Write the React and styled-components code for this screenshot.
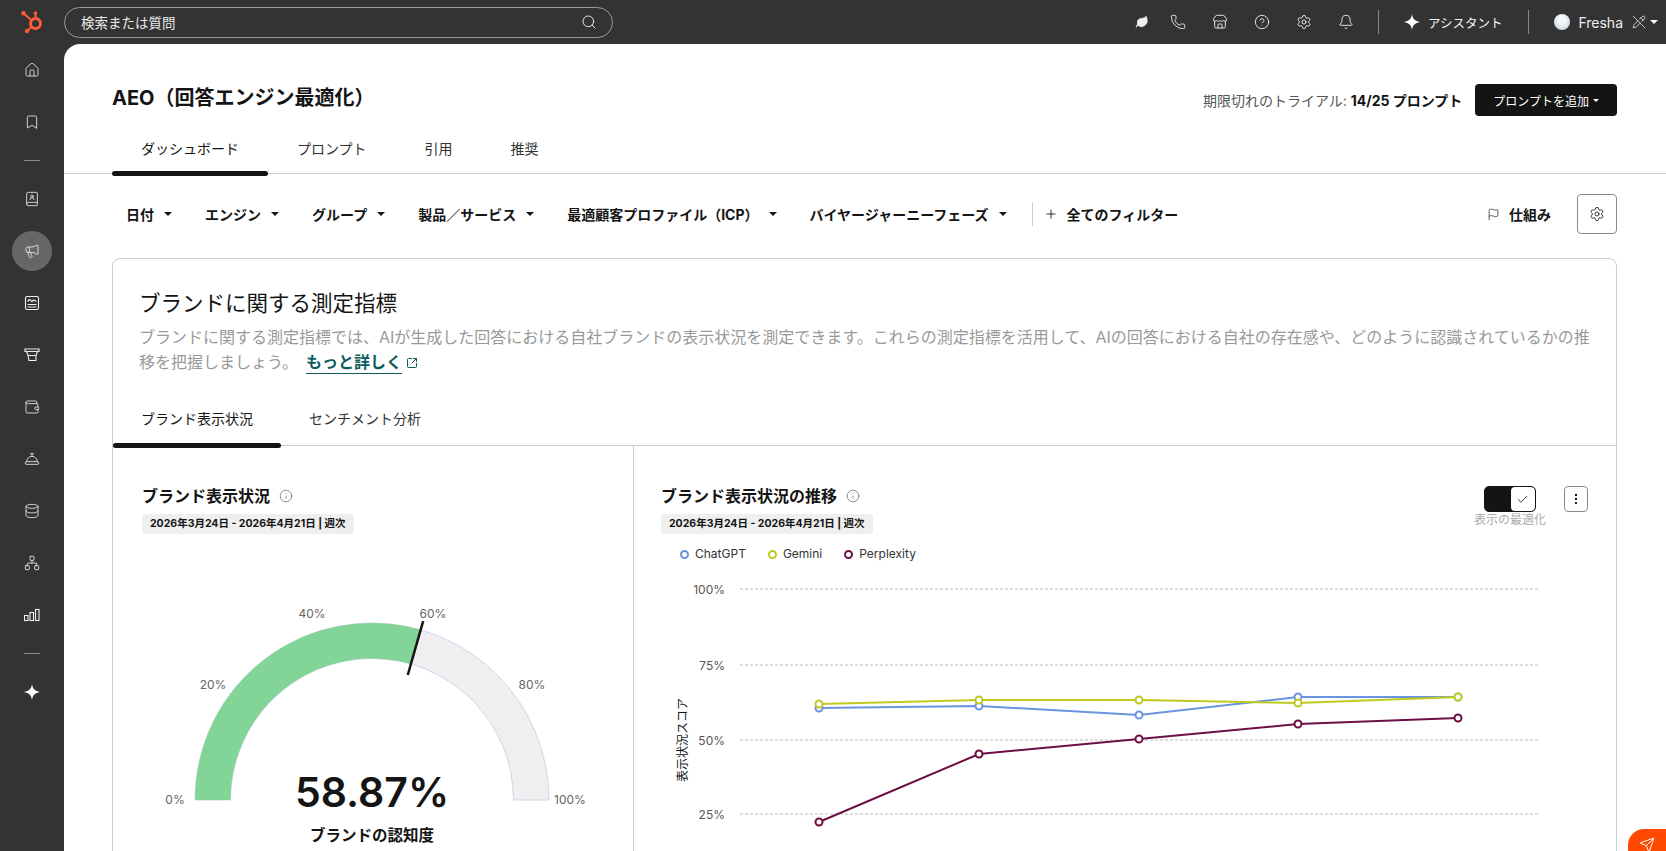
import React from 'react';
import styled, { createGlobalStyle } from 'styled-components';
import {
  Bell, Bookmark, BookUser, Check, CircleHelp, ConciergeBell, Database, EllipsisVertical,
  Flag, House, Info, Leaf, Megaphone, Network, PencilOff, Phone, Plus, Search, Send,
  Settings, SquareArrowOutUpRight, Store, Wallet,
} from 'lucide-react';

const GlobalStyle = createGlobalStyle`
  html, body { margin: 0; height: 100%; overflow: hidden; }
  body {
    font-family: Inter, "Noto Sans CJK JP", sans-serif;
    color: #141414;
    background: #333;
  }
`;

const Shell = styled.div`
  display: grid;
  grid-template-columns: 64px 1fr;
  grid-template-rows: 44px 1fr;
  height: 100vh;
`;

const TopBar = styled.header`
  grid-column: 1 / 3;
  display: flex;
  align-items: center;
  padding-right: 8px;
  background: #333;
  color: #fff;
`;
const LogoCell = styled.div`
  width: 64px;
  display: flex;
  justify-content: center;
`;
const SearchBox = styled.div`
  width: 549px;
  height: 31px;
  box-sizing: border-box;
  display: flex;
  align-items: center;
  justify-content: space-between;
  padding: 0 15px 0 16px;
  border: 1px solid #9a9a9a;
  border-radius: 16px;
  font-size: 13.5px;
  color: #e8e8e8;
`;
const TopRight = styled.div`
  margin-left: auto;
  display: flex;
  align-items: center;
`;
const TopIcon = styled.span`
  width: ${(p) => (p.$narrow ? 30 : 42)}px;
  display: flex;
  justify-content: center;
`;
const TopDivider = styled.span`
  width: 1px;
  height: 24px;
  background: #8a8a8a;
  margin: ${(p) => p.$margin};
`;
const AssistantLabel = styled.span`
  font-size: 12.5px;
  margin-left: 8px;
  color: #f2f2f2;
`;
const Avatar = styled.span`
  width: 16px;
  height: 16px;
  border-radius: 50%;
  background: radial-gradient(circle at 50% 38%, #f4f6f9 0 30%, #cfd7e3 75%);
`;
const AccountName = styled.span`
  font-size: 14px;
  margin: 0 9px 0 8px;
  color: #eee;
`;
const Caret = styled.span`
  display: inline-block;
  border-left: ${(p) => p.$size || 4}px solid transparent;
  border-right: ${(p) => p.$size || 4}px solid transparent;
  border-top: ${(p) => p.$size || 4}px solid ${(p) => p.$color || '#141414'};
  margin-left: ${(p) => p.$gap || 0}px;
`;

const SideBar = styled.nav`
  display: flex;
  flex-direction: column;
  align-items: center;
  background: #333;
  color: #eee;
`;
const SideItem = styled.div`
  width: 40px;
  height: 52px;
  display: flex;
  align-items: center;
  justify-content: center;
  position: relative;
  z-index: 0;
  ${(p) => p.$active && `
    &::before {
      content: '';
      position: absolute;
      z-index: -1;
      width: 40px;
      height: 40px;
      border-radius: 50%;
      background: #666;
    }
  `}
`;
const SideDivider = styled.div`
  width: 16px;
  height: 1px;
  background: #8a8a8a;
  margin: 12px 0;
`;

const Main = styled.main`
  background: #fff;
  border-top-left-radius: 16px;
  overflow: hidden;
  min-height: 0;
`;
const PageHeader = styled.div`
  border-bottom: 1px solid #ccc;
`;
const HeaderTop = styled.div`
  display: flex;
  align-items: center;
  justify-content: space-between;
  padding: 40px 49px 0 48px;
`;
const PageTitle = styled.h1`
  margin: 0 0 4px;
  font-size: 20px;
  font-weight: 700;
  line-height: 28px;
`;
const HeaderActions = styled.div`
  display: flex;
  align-items: center;
  gap: 13px;
`;
const TrialText = styled.span`
  font-size: 14px;
  color: #555;
  b { color: #141414; font-weight: 700; }
`;
const PrimaryButton = styled.button`
  height: 32px;
  padding: 0 18px;
  display: flex;
  align-items: center;
  background: #141414;
  color: #fff;
  border: 0;
  border-radius: 4px;
  font: inherit;
  font-size: 12px;
`;
const TabRow = styled.div`
  display: flex;
  padding-left: ${(p) => p.$inset || 0}px;
  margin-top: ${(p) => p.$top || 0}px;
  border-bottom: ${(p) => (p.$lined ? '1px solid #ccc' : '0')};
`;
const Tab = styled.div`
  position: relative;
  padding: 0 ${(p) => p.$pad || 29}px;
  height: ${(p) => p.$height || 45}px;
  display: flex;
  align-items: center;
  padding-bottom: ${(p) => p.$under || 5}px;
  box-sizing: border-box;
  font-size: 14px;
  color: ${(p) => (p.$active ? '#141414' : '#333')};
  &::after {
    content: '';
    display: ${(p) => (p.$active ? 'block' : 'none')};
    position: absolute;
    left: 0;
    right: 0;
    bottom: -3px;
    height: 5px;
    border-radius: 3px;
    background: #141414;
  }
`;

const FilterBar = styled.div`
  display: flex;
  align-items: center;
  margin: 20px 49px 24px 62px;
  height: 40px;
  font-size: 14px;
  font-weight: 700;
`;
const FilterButton = styled.span`
  display: flex;
  align-items: center;
  margin-right: 33px;
  white-space: nowrap;
`;
const FilterDivider = styled.span`
  width: 1px;
  height: 24px;
  background: #ccc;
  margin: 0 11px 0 -8px;
`;
const AllFilters = styled.span`
  display: flex;
  align-items: center;
  gap: 9px;
`;
const FilterRight = styled.div`
  margin-left: auto;
  display: flex;
  align-items: center;
`;
const HowItWorks = styled.span`
  display: flex;
  align-items: center;
  gap: 9px;
  margin-right: 26px;
`;
const SquareButton = styled.span`
  width: ${(p) => p.$w}px;
  height: ${(p) => p.$h}px;
  box-sizing: border-box;
  display: flex;
  align-items: center;
  justify-content: center;
  border: 1px solid #8a8a8a;
  border-radius: 4px;
`;

const Card = styled.section`
  margin: 0 49px 0 48px;
  border: 1px solid #ccc;
  border-radius: 8px;
`;
const CardHead = styled.div`
  padding: 29px 26px 0;
`;
const CardTitle = styled.h2`
  margin: 0;
  font-size: 21.5px;
  font-weight: 400;
  line-height: 30px;
`;
const CardDesc = styled.p`
  margin: 7px 0 0;
  font-size: 16px;
  line-height: 25px;
  color: #999;
  white-space: nowrap;
`;
const MoreLink = styled.a`
  margin-left: 8px;
  color: #0b5c5c;
  font-weight: 700;
  border-bottom: 1px solid #0b5c5c;
  padding-bottom: 1px;
`;
const LinkIcon = styled(SquareArrowOutUpRight)`
  margin-left: 4px;
  vertical-align: -1px;
  color: #0b5c5c;
`;

const Panels = styled.div`
  display: grid;
  grid-template-columns: 520px 1fr;
`;
const Panel = styled.div`
  padding-top: 40px;
  position: relative;
  min-width: 0;
  border-left: ${(p) => (p.$divided ? '1px solid #ccc' : '0')};
`;
const PanelHead = styled.div`
  display: flex;
  justify-content: space-between;
  padding: 0 ${(p) => (p.$divided ? 28 : 0)}px 0 ${(p) => (p.$divided ? 27 : 29)}px;
`;
const PanelTitle = styled.h3`
  margin: 0;
  display: flex;
  align-items: center;
  gap: 9px;
  font-size: 16px;
  line-height: 20px;
  font-weight: 700;
  svg { color: #666; }
`;
const DatePill = styled.div`
  display: inline-block;
  margin-top: 8px;
  padding: 0 8px;
  height: 20px;
  line-height: 20px;
  background: #efefef;
  border-radius: 4px;
  font-size: 10.5px;
  font-weight: 700;
`;
const Controls = styled.div`
  display: flex;
  align-items: flex-start;
  gap: 18px;
`;
const ToggleBlock = styled.div`
  display: flex;
  flex-direction: column;
  align-items: center;
`;
const Toggle = styled.div`
  width: 52px;
  height: 26px;
  box-sizing: border-box;
  display: flex;
  justify-content: flex-end;
  border: 1px solid #141414;
  border-radius: 5px;
  background: #141414;
  overflow: hidden;
`;
const ToggleKnob = styled.span`
  width: 24px;
  display: flex;
  align-items: center;
  justify-content: center;
  background: #fff;
  border-radius: 4px;
`;
const ToggleLabel = styled.span`
  font-size: 12px;
  line-height: 16px;
  color: #aaa;
  white-space: nowrap;
`;

const GaugeWrap = styled.div`
  position: relative;
  height: 280px;
  margin-top: 56px;
`;
const GaugeSvg = styled.svg`
  display: block;
  font-size: 12px;
  fill: #666;
`;
const GaugeValue = styled.div`
  position: absolute;
  left: 0;
  width: 518px;
  top: 177px;
  text-align: center;
  font-size: 41px;
  line-height: 50px;
  font-weight: 600;
`;
const GaugeCaption = styled.div`
  position: absolute;
  left: 0;
  width: 518px;
  top: 234px;
  text-align: center;
  font-size: 15.5px;
  line-height: 24px;
  font-weight: 700;
`;

const Legend = styled.div`
  display: flex;
  gap: 22px;
  margin: 12px 0 0 46px;
  font-size: 12px;
  line-height: 16px;
  color: #333;
`;
const LegendItem = styled.span`
  display: flex;
  align-items: center;
  gap: 6px;
  &::before {
    content: '';
    width: 9px;
    height: 9px;
    box-sizing: border-box;
    border: 2px solid ${(p) => p.$color};
    border-radius: 50%;
  }
`;
const ChartSvg = styled.svg`
  display: block;
  margin-top: 8px;
  font-size: 12px;
  fill: #555;
`;

const Feedback = styled.div`
  position: fixed;
  right: 0;
  bottom: 0;
  width: 38px;
  height: 22px;
  padding: 8px 0 0 11px;
  box-sizing: border-box;
  overflow: hidden;
  background: #ff4800;
  border-top-left-radius: 16px;
  color: #fff;
`;

const Hub = () => (
  <svg width="24" height="24" viewBox="0 0 24 24" fill="none" stroke="#ff5c35">
    <circle cx="15.5" cy="13.5" r="5" strokeWidth="3" />
    <path d="M15.5 3.5v5M3.5 3.5l9 7.5M7 21l5-4.5" strokeWidth="2" />
    <circle cx="3.4" cy="3.2" r="2.2" fill="#ff5c35" stroke="none" />
    <circle cx="7" cy="21" r="2.2" fill="#ff5c35" stroke="none" />
    <circle cx="15.5" cy="3" r="1.8" fill="#ff5c35" stroke="none" />
  </svg>
);
const Sparkle = ({ size = 16 }) => (
  <svg width={size} height={size} viewBox="0 0 16 16" fill="#fff">
    <path d="M8 0c.7 4.8 2.9 7 8 8-5.100 1-7.300 3.200-8 8-.7-4.800-2.900-7-8-8 5.100-1 7.300-3.200 8-8z" />
  </svg>
);
const ReportIcon = () => (
  <svg width="16" height="16" viewBox="0 0 16 16" fill="none" stroke="currentColor" strokeWidth="1.1">
    <rect x="1.500" y="1.500" width="13" height="13" rx="1.500" />
    <path d="M3.500 6.500l2-2 2.500 2 1.500-1.500 3 1.500M3.500 9.500h9M3.500 12h9" />
  </svg>
);
const FunnelIcon = () => (
  <svg width="16" height="16" viewBox="0 0 16 16" fill="none" stroke="currentColor" strokeWidth="1.1">
    <path d="M1 2h14v2.500H1zM2.500 4.500l1.500 4h8l1.500-4M4 8.500h8v5H5z" />
  </svg>
);
const BarsIcon = () => (
  <svg width="16" height="16" viewBox="0 0 16 16" fill="none" stroke="currentColor" strokeWidth="1.1">
    <rect x="0.500" y="8.500" width="3.500" height="5" />
    <rect x="6" y="5.500" width="3.500" height="8" />
    <rect x="11.500" y="2.500" width="3.500" height="11" />
  </svg>
);

const navTop = [House, Bookmark];
const navMain = [BookUser, Megaphone, ReportIcon, FunnelIcon, Wallet, ConciergeBell, Database, Network, BarsIcon];
const topIcons = [Phone, Store, CircleHelp, Settings, Bell];
const filters = ['日付', 'エンジン', 'グループ', '製品／サービス', '最適顧客プロファイル（ICP）', 'バイヤージャーニーフェーズ'];

const gaugeLabels = [
  ['0%', 62, 214], ['20%', 100, 99], ['40%', 199, 28],
  ['60%', 320, 28], ['80%', 419, 99], ['100%', 457, 214],
];

// gauge centre and radii, in the svg's own coordinates
const CX = 259;
const CY = 210;
const OUTER = 177;
const INNER = 141.5;
const polar = (r, f) => [CX - r * Math.cos(Math.PI * f), CY - r * Math.sin(Math.PI * f)];
const band = (from, to) => {
  const [x1, y1] = polar(OUTER, from);
  const [x2, y2] = polar(OUTER, to);
  const [x3, y3] = polar(INNER, to);
  const [x4, y4] = polar(INNER, from);
  return `M${x1} ${y1}A${OUTER} ${OUTER} 0 0 1 ${x2} ${y2}L${x3} ${y3}A${INNER} ${INNER} 0 0 0 ${x4} ${y4}Z`;
};
const SCORE = 0.5887;
const [nx1, ny1] = polar(186, SCORE);
const [nx2, ny2] = polar(130, SCORE);

const xs = [185, 345, 505, 664, 824];
const series = [
  { name: 'ChatGPT', color: '#6b94e0', ys: [138, 136, 145, 127, 127] },
  { name: 'Gemini', color: '#bfc91e', ys: [134, 130, 130, 133, 127] },
  { name: 'Perplexity', color: '#6b0f45', ys: [252, 184, 169, 154, 148] },
];
const grid = [['100%', 19], ['75%', 95], ['50%', 170], ['25%', 244]];

const Gauge = () => (
  <GaugeWrap>
    <GaugeSvg width="518" height="280">
      <path d={band(0, 1)} fill="#efefef" stroke="#cdd6ec" strokeWidth="1" />
      <path d={band(0, SCORE)} fill="#82d596" />
      <line x1={nx1} y1={ny1} x2={nx2} y2={ny2} stroke="#141414" strokeWidth="2.5" />
      {gaugeLabels.map(([t, x, y]) => (
        <text key={t} x={x} y={y} textAnchor="middle">{t}</text>
      ))}
    </GaugeSvg>
    <GaugeValue>58.87%</GaugeValue>
    <GaugeCaption>ブランドの認知度</GaugeCaption>
  </GaugeWrap>
);

const Chart = () => (
  <ChartSvg width="982" height="300">
    {grid.map(([t, y]) => (
      <g key={t}>
        <line x1="106" x2="904" y1={y} y2={y} stroke="#bbb" strokeDasharray="3 2" />
        <text x="91" y={y + 5} textAnchor="end">{t}</text>
      </g>
    ))}
    <text transform="translate(53 170) rotate(-90)" textAnchor="middle" fill="#141414">表示状況スコア</text>
    {series.map((s) => (
      <g key={s.name}>
        <polyline fill="none" stroke={s.color} strokeWidth="2" points={xs.map((x, i) => `${x},${s.ys[i]}`).join(' ')} />
        {xs.map((x, i) => (
          <circle key={x} cx={x} cy={s.ys[i]} r="3.500" fill="#fff" stroke={s.color} strokeWidth="2" />
        ))}
      </g>
    ))}
  </ChartSvg>
);

export default function App() {
  return (
    <Shell>
      <GlobalStyle />
      <TopBar>
        <LogoCell><Hub /></LogoCell>
        <SearchBox>
          検索または質問
          <Search size={16} strokeWidth={1.5} />
        </SearchBox>
        <TopRight>
          <TopIcon $narrow><Leaf size={14} fill="#eee" strokeWidth={1} /></TopIcon>
          {topIcons.map((Icon, i) => (
            <TopIcon key={i}><Icon size={16} strokeWidth={1.25} /></TopIcon>
          ))}
          <TopDivider $margin="0 25px 0 11px" />
          <Sparkle />
          <AssistantLabel>アシスタント</AssistantLabel>
          <TopDivider $margin="0 25px 0 26px" />
          <Avatar />
          <AccountName>Fresha</AccountName>
          <PencilOff size={14} strokeWidth={1.25} />
          <Caret $size={4.5} $color="#fff" $gap={4} />
        </TopRight>
      </TopBar>

      <SideBar>
        {navTop.map((Icon, i) => (
          <SideItem key={i}><Icon size={16} strokeWidth={1.25} /></SideItem>
        ))}
        <SideDivider />
        {navMain.map((Icon, i) => (
          <SideItem key={i} $active={Icon === Megaphone}><Icon size={16} strokeWidth={1.25} /></SideItem>
        ))}
        <SideDivider />
        <SideItem><Sparkle /></SideItem>
      </SideBar>

      <Main>
        <PageHeader>
          <HeaderTop>
            <PageTitle>AEO（回答エンジン最適化）</PageTitle>
            <HeaderActions>
              <TrialText>期限切れのトライアル: <b>14/25 プロンプト</b></TrialText>
              <PrimaryButton>プロンプトを追加<Caret $size={3} $color="#fff" $gap={4} /></PrimaryButton>
            </HeaderActions>
          </HeaderTop>
          <TabRow $inset={48} $top={12}>
            <Tab $active>ダッシュボード</Tab>
            <Tab>プロンプト</Tab>
            <Tab>引用</Tab>
            <Tab>推奨</Tab>
          </TabRow>
        </PageHeader>

        <FilterBar>
          {filters.map((f) => (
            <FilterButton key={f}>{f}<Caret $gap={10} /></FilterButton>
          ))}
          <FilterDivider />
          <AllFilters><Plus size={14} strokeWidth={1.5} />全てのフィルター</AllFilters>
          <FilterRight>
            <HowItWorks><Flag size={13} strokeWidth={1.25} />仕組み</HowItWorks>
            <SquareButton $w={40} $h={40}><Settings size={16} strokeWidth={1.25} /></SquareButton>
          </FilterRight>
        </FilterBar>

        <Card>
          <CardHead>
            <CardTitle>ブランドに関する測定指標</CardTitle>
            <CardDesc>
              ブランドに関する測定指標では、AIが生成した回答における自社ブランドの表示状況を測定できます。これらの測定指標を活用して、AIの回答における自社の存在感や、どのように認識されているかの推
              <br />
              移を把握しましょう。
              <MoreLink>もっと詳しく</MoreLink>
              <LinkIcon size={12} />
            </CardDesc>
          </CardHead>
          <TabRow $top={20} $lined>
            <Tab $active $pad={28} $height={50} $under={0}>ブランド表示状況</Tab>
            <Tab $pad={28} $height={50} $under={0}>センチメント分析</Tab>
          </TabRow>
          <Panels>
            <Panel>
              <PanelHead>
                <div>
                  <PanelTitle>ブランド表示状況<Info size={14} strokeWidth={1.25} /></PanelTitle>
                  <DatePill>2026年3月24日 - 2026年4月21日 | 週次</DatePill>
                </div>
              </PanelHead>
              <Gauge />
            </Panel>
            <Panel $divided>
              <PanelHead $divided>
                <div>
                  <PanelTitle>ブランド表示状況の推移<Info size={14} strokeWidth={1.25} /></PanelTitle>
                  <DatePill>2026年3月24日 - 2026年4月21日 | 週次</DatePill>
                </div>
                <Controls>
                  <ToggleBlock>
                    <Toggle><ToggleKnob><Check size={13} strokeWidth={1.5} /></ToggleKnob></Toggle>
                    <ToggleLabel>表示の最適化</ToggleLabel>
                  </ToggleBlock>
                  <SquareButton $w={24} $h={26}><EllipsisVertical size={14} /></SquareButton>
                </Controls>
              </PanelHead>
              <Legend>
                {series.map((s) => (
                  <LegendItem key={s.name} $color={s.color}>{s.name}</LegendItem>
                ))}
              </Legend>
              <Chart />
            </Panel>
          </Panels>
        </Card>
      </Main>
      <Feedback><Send size={16} strokeWidth={1.5} /></Feedback>
    </Shell>
  );
}
